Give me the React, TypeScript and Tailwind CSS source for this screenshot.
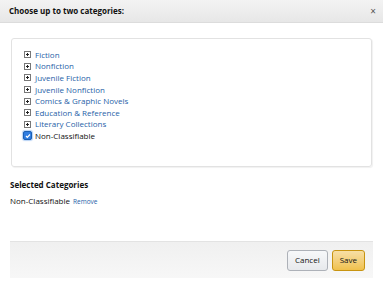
import { FC } from "react";

const categories = [
  "Fiction",
  "Nonfiction",
  "Juvenile Fiction",
  "Juvenile Nonfiction",
  "Comics & Graphic Novels",
  "Education & Reference",
  "Literary Collections",
];

const PlusBox: FC = () => (
  <svg width="7" height="7" viewBox="0 0 7 7" className="shrink-0">
    <rect x="0.5" y="0.5" width="6" height="6" fill="#fff" stroke="#777" />
    <path d="M2 3.5h3M3.5 2v3" stroke="#222" strokeWidth="1" />
  </svg>
);

const App: FC = () => {
  return (
    <div
      className="w-[383px] h-[286px] bg-white overflow-hidden flex flex-col"
      style={{ fontFamily: '"Open Sans", "Noto Sans", Arial, sans-serif' }}
    >
      {/* Header */}
      <div className="h-[23px] shrink-0 flex items-center justify-between pl-[9px] pr-[7px] bg-gradient-to-b from-[#f3f3f3] to-[#e7e7e7] border-b border-[#dcdcdc]">
        <span className="text-[8px] font-bold text-[#111]">Choose up to two categories:</span>
        <span className="text-[10px] text-[#555] leading-none">×</span>
      </div>

      {/* Category tree */}
      <div className="mx-[11px] mt-[15px] h-[129px] border border-[#e2e2e2] rounded-[3px] shadow-[1px_1px_1px_rgba(0,0,0,0.06)] pt-[10px] pl-[12px]">
        <ul className="flex flex-col">
          {categories.map((c) => (
            <li key={c} className="h-[11.6px] flex items-center gap-[4px]">
              <PlusBox />
              <a className="text-[8px] text-[#1f5fa8] leading-none">{c}</a>
            </li>
          ))}
          <li className="h-[11.6px] flex items-center gap-[3px] -ml-[1px]">
            <span className="w-[9px] h-[9px] rounded-[2px] bg-[#2f7de1] border border-[#1a5fb4] shadow-[0_0_1px_1px_rgba(47,125,225,0.35)] flex items-center justify-center">
              <svg width="6" height="6" viewBox="0 0 6 6">
                <path d="M1 3l1.3 1.3L5 1.5" stroke="#fff" strokeWidth="1.2" fill="none" />
              </svg>
            </span>
            <span className="text-[8px] text-[#111] leading-none">Non-Classifiable</span>
          </li>
        </ul>
      </div>

      {/* Selected */}
      <div className="pl-[10px] mt-[12px]">
        <div className="text-[8px] font-bold text-[#111]">Selected Categories</div>
        <div className="mt-[4px] flex items-baseline gap-[3px]">
          <span className="text-[8px] text-[#111]">Non-Classifiable</span>
          <a className="text-[6.5px] text-[#1f5fa8]">Remove</a>
        </div>
      </div>

      {/* Footer */}
      <div className="mt-auto mb-[8px] mx-[10px] h-[37px] bg-gradient-to-b from-[#f0f0f0] to-[#f7f7f7] border-t border-[#e3e3e3] flex items-center justify-end gap-[4px] pr-[8px]">
        <button className="h-[21px] px-[7px] rounded-[3px] border border-[#adb1b8] bg-gradient-to-b from-[#f7f8fa] to-[#e7e9ec] text-[8px] text-[#111]">
          Cancel
        </button>
        <button className="h-[21px] px-[7px] rounded-[3px] border border-[#c89411] bg-gradient-to-b from-[#f7dfa5] to-[#f0c14b] text-[8px] text-[#111]">
          Save
        </button>
      </div>
    </div>
  );
};

export default App;
